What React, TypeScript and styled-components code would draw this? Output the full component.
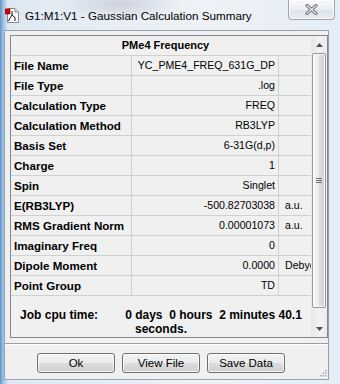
import React from "react";
import styled, { createGlobalStyle } from "styled-components";

const GlobalStyle = createGlobalStyle`
  html, body {
    margin: 0;
    padding: 0;
  }
  body {
    width: 340px;
    height: 384px;
    overflow: hidden;
    font-family: "Liberation Sans", Arial, sans-serif;
    color: #000;
  }
`;

const Window = styled.div`
  width: 340px;
  height: 384px;
  display: flex;
  flex-direction: column;
  position: relative;
  background:
    radial-gradient(ellipse 60px 14px at 120px 4px, rgba(150, 160, 175, 0.35), rgba(150, 160, 175, 0) 100%),
    linear-gradient(to right, #5f93c9 0px, #9dbfe2 3px, #dfe8f2 8px, #eef2f6 60%, #e4edf6 100%);
`;

const TitleBar = styled.div`
  height: 30px;
  display: flex;
  align-items: flex-start;
  flex-shrink: 0;
`;

const TitleIcon = styled.svg`
  margin: 8px 0 0 5px;
  flex-shrink: 0;
`;

const TitleText = styled.div`
  margin: 8px 0 0 5px;
  font-size: 11.7px;
  line-height: 16px;
  color: #000;
  white-space: nowrap;
`;

const CloseButton = styled.div`
  margin-left: auto;
  margin-right: 5px;
  width: 45px;
  height: 19px;
  border: 1px solid #9ea6b0;
  border-top: none;
  border-radius: 0 0 4px 4px;
  background: linear-gradient(to bottom, #f7f8fa 0%, #eceff3 50%, #dfe4ea 51%, #e8ecf0 100%);
  box-shadow: inset 0 0 0 1px rgba(255, 255, 255, 0.7);
  display: flex;
  align-items: center;
  justify-content: center;
`;

const Client = styled.div`
  position: relative;
  box-sizing: border-box;
  margin: 0 11px 0 4px;
  height: 350px;
  border: 1px solid #98a2ad;
  background: #f0f0f0;
  display: flex;
  flex-direction: column;
`;

const Panel = styled.div`
  box-sizing: border-box;
  margin: 4px 1px 0 5px;
  width: 318px;
  height: 303px;
  border: 1px solid #828790;
  display: flex;
`;

const TableArea = styled.div`
  width: 300px;
  display: flex;
  flex-direction: column;
`;

const HeaderRow = styled.div`
  box-sizing: border-box;
  height: 20px;
  border-bottom: 1px solid #d0d0d0;
  padding-left: 9px;
  text-align: center;
  font-weight: bold;
  font-size: 11px;
  line-height: 19px;
`;

const Row = styled.div`
  box-sizing: border-box;
  height: 20px;
  display: grid;
  grid-template-columns: 121px 147px 32px;
  border-bottom: 1px solid #d0d0d0;
`;

const LabelCell = styled.div`
  border-right: 1px solid #d0d0d0;
  padding-left: 3px;
  font-weight: bold;
  font-size: 11.6px;
  line-height: 19px;
  white-space: nowrap;
  overflow: hidden;
`;

const ValueCell = styled.div`
  border-right: 1px solid #d0d0d0;
  padding-right: 3px;
  text-align: right;
  font-size: 10.6px;
  line-height: 19px;
  white-space: nowrap;
  overflow: hidden;
`;

const UnitCell = styled.div`
  padding-left: 6px;
  font-size: 10.6px;
  line-height: 19px;
  white-space: nowrap;
  overflow: hidden;
`;

const CpuBlock = styled.div`
  padding-top: 12px;
  text-align: center;
  font-weight: bold;
  font-size: 12px;
  line-height: 14px;
  white-space: pre;
`;

const CpuGap = styled.span`
  display: inline-block;
  width: 27px;
`;

const ScrollBar = styled.div`
  width: 16px;
  display: flex;
  flex-direction: column;
  background: linear-gradient(to right, #e6e6e6, #f2f2f2 50%, #ececec);
`;

const ArrowButton = styled.div`
  height: 17px;
  display: flex;
  align-items: center;
  justify-content: center;
  flex-shrink: 0;
`;

const Thumb = styled.div`
  box-sizing: border-box;
  margin: 0 1px;
  height: 255px;
  border: 1px solid #979797;
  border-radius: 2px;
  background: linear-gradient(to right, #f6f6f6 0%, #ececec 45%, #dcdcdc 55%, #d3d3d3 100%);
  box-shadow: inset 0 0 0 1px rgba(255, 255, 255, 0.8);
  display: flex;
  align-items: center;
  justify-content: center;
`;

const Track = styled.div`
  flex: 1;
`;

const Separator = styled.div`
  margin-top: 5px;
  height: 1px;
  background: #a0a0a0;
  box-shadow: 0 1px 0 #ffffff;
`;

const ButtonRow = styled.div`
  margin-top: 9px;
  padding-left: 32px;
  display: flex;
  gap: 7px;
`;

const Button = styled.button`
  box-sizing: border-box;
  width: 78px;
  height: 20px;
  padding: 0;
  border: 1px solid #707070;
  border-radius: 3px;
  background: linear-gradient(to bottom, #f2f2f2 0%, #ebebeb 50%, #dddddd 50%, #cfcfcf 100%);
  box-shadow: inset 0 0 0 1px rgba(255, 255, 255, 0.75);
  font-family: "Liberation Sans", Arial, sans-serif;
  font-size: 11.5px;
  color: #000;
  line-height: 18px;
`;

const Grip = styled.svg`
  position: absolute;
  right: 1px;
  bottom: 2px;
`;

const rows: [string, string, string][] = [
  ["File Name", "YC_PME4_FREQ_631G_DP", ""],
  ["File Type", ".log", ""],
  ["Calculation Type", "FREQ", ""],
  ["Calculation Method", "RB3LYP", ""],
  ["Basis Set", "6-31G(d,p)", ""],
  ["Charge", "1", ""],
  ["Spin", "Singlet", ""],
  ["E(RB3LYP)", "-500.82703038", "a.u."],
  ["RMS Gradient Norm", "0.00001073", "a.u."],
  ["Imaginary Freq", "0", ""],
  ["Dipole Moment", "0.0000", "Debye"],
  ["Point Group", "TD", ""],
];

const AppIcon = () => (
  <TitleIcon width="15" height="15" viewBox="0 0 15 15">
    <path d="M2.5 0.5 H10 L13.5 4 V14.5 H2.5 Z" fill="#fff" stroke="#8a8a8a" />
    <path d="M10 0.5 V4 H13.5" fill="#e6e6e6" stroke="#8a8a8a" />
    <path d="M7 3 V7 M7 7 L4.5 11 M7 7 L10 9.5 M10 9.5 V13 M4.5 11 L3.5 13" stroke="#111" strokeWidth="1" fill="none" />
    <rect x="0" y="1" width="5" height="5" fill="#e00000" stroke="#7a0000" strokeWidth="0.6" />
  </TitleIcon>
);

export default function App() {
  return (
    <>
      <GlobalStyle />
      <Window>
        <TitleBar>
          <AppIcon />
          <TitleText>G1:M1:V1 - Gaussian Calculation Summary</TitleText>
          <CloseButton>
            <svg width="13" height="11" viewBox="0 0 13 11">
              <path d="M2 1.5 L11 9.5 M11 1.5 L2 9.5" stroke="#6c7077" strokeWidth="3.2" strokeLinecap="round" />
              <path d="M2 1.5 L11 9.5 M11 1.5 L2 9.5" stroke="#eef0f2" strokeWidth="1.2" strokeLinecap="round" />
            </svg>
          </CloseButton>
        </TitleBar>
        <Client>
          <Panel>
            <TableArea>
              <HeaderRow>PMe4 Frequency</HeaderRow>
              {rows.map(([label, value, unit]) => (
                <Row key={label}>
                  <LabelCell>{label}</LabelCell>
                  <ValueCell>{value}</ValueCell>
                  <UnitCell>{unit}</UnitCell>
                </Row>
              ))}
              <CpuBlock>
                Job cpu time:<CpuGap />0 days  0 hours  2 minutes 40.1
                <br />
                seconds.
              </CpuBlock>
            </TableArea>
            <ScrollBar>
              <ArrowButton>
                <svg width="7" height="4" viewBox="0 0 7 4">
                  <path d="M0 4 L3.5 0 L7 4 Z" fill="#505050" />
                </svg>
              </ArrowButton>
              <Thumb>
                <svg width="6" height="6" viewBox="0 0 6 6">
                  <path d="M0 0.5 H6 M0 2.5 H6 M0 4.5 H6" stroke="#6f6f6f" strokeWidth="1" />
                </svg>
              </Thumb>
              <Track />
              <ArrowButton>
                <svg width="7" height="4" viewBox="0 0 7 4">
                  <path d="M0 0 L7 0 L3.5 4 Z" fill="#505050" />
                </svg>
              </ArrowButton>
            </ScrollBar>
          </Panel>
          <Separator />
          <ButtonRow>
            <Button>Ok</Button>
            <Button>View File</Button>
            <Button>Save Data</Button>
          </ButtonRow>
          <Grip width="7" height="7" viewBox="0 0 7 7">
            <g fill="#a8a8a8">
              <rect x="5" y="0" width="1.5" height="1.5" />
              <rect x="2.5" y="2.5" width="1.5" height="1.5" />
              <rect x="5" y="2.5" width="1.5" height="1.5" />
              <rect x="0" y="5" width="1.5" height="1.5" />
              <rect x="2.5" y="5" width="1.5" height="1.5" />
              <rect x="5" y="5" width="1.5" height="1.5" />
            </g>
          </Grip>
        </Client>
      </Window>
    </>
  );
}
